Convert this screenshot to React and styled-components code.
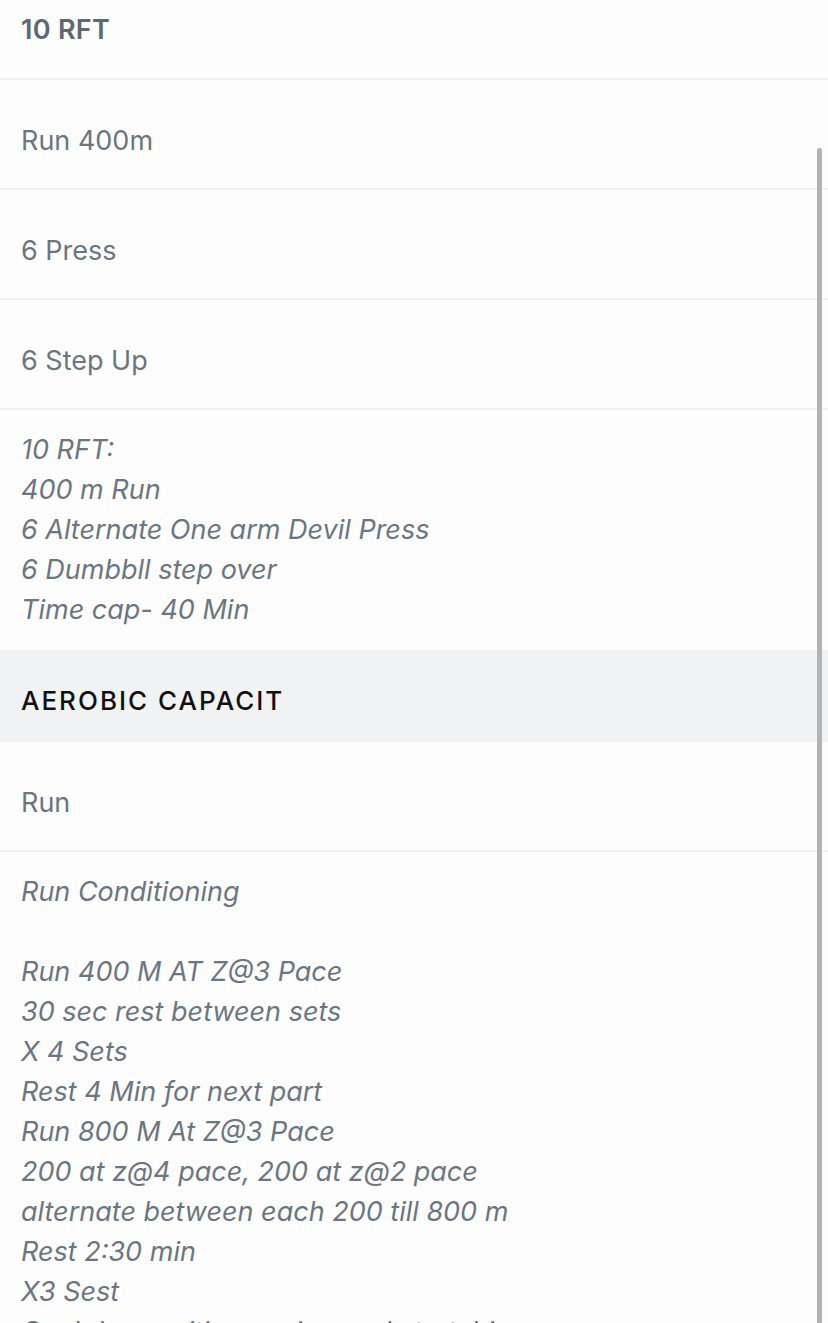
import styled, { createGlobalStyle } from 'styled-components';

const GlobalStyle = createGlobalStyle`
    *, *::before, *::after {
        box-sizing: border-box;
    }
    html, body {
        margin: 0;
        padding: 0;
        background: #fdfdfd;
    }
    body {
        font-family: Inter, "Noto Sans", "Liberation Sans", sans-serif;
        -webkit-font-smoothing: antialiased;
    }
`;

const workout = [
    { type: 'title', text: '10 RFT' },
    { type: 'row', text: 'Run 400m' },
    { type: 'row', text: '6 Press' },
    { type: 'row', text: '6 Step Up' },
    {
        type: 'note',
        lines: ['10 RFT:', '400 m Run', '6 Alternate One arm Devil Press', '6 Dumbbll step over', 'Time cap- 40 Min'],
    },
    { type: 'section', text: 'AEROBIC CAPACIT' },
    { type: 'row', text: 'Run' },
    {
        type: 'note',
        lines: [
            'Run Conditioning',
            '',
            'Run 400 M AT Z@3 Pace',
            '30 sec rest between sets',
            'X 4 Sets',
            'Rest 4 Min for next part',
            'Run 800 M At Z@3 Pace',
            '200 at z@4 pace, 200 at z@2 pace',
            'alternate between each 200 till 800 m',
            'Rest 2:30 min',
            'X3 Sest',
            'Cool down with easy jog and stretching',
        ],
    },
];

function App() {
    return (
        <Screen>
            <GlobalStyle />
            <List>
                {workout.map((item, i) => {
                    if (item.type === 'title') return <TitleRow key={i}>{item.text}</TitleRow>;
                    if (item.type === 'section') return <SectionRow key={i}>{item.text}</SectionRow>;
                    if (item.type === 'note') {
                        return (
                            <NoteBlock key={i}>
                                {item.lines.map((line, j) => (
                                    <NoteLine key={j}>{line || '\u00a0'}</NoteLine>
                                ))}
                            </NoteBlock>
                        );
                    }
                    return <ItemRow key={i}>{item.text}</ItemRow>;
                })}
            </List>
            <ScrollThumb />
        </Screen>
    );
}

const Screen = styled.div`
    position: relative;
    width: 828px;
    height: 1323px;
    overflow: hidden;
    background: #fdfdfd;
`;
const List = styled.div`
    display: flex;
    flex-direction: column;
`;
const TitleRow = styled.div`
    display: flex;
    align-items: center;
    height: 80px;
    padding: 0 21px 20px;
    border-bottom: 2px solid #f1f1f1;

    font-size: 27px;
    font-weight: 600;
    letter-spacing: 0.3px;
    color: #5d6873;
`;
const ItemRow = styled.div`
    display: flex;
    align-items: center;
    height: 110px;
    padding: 12px 21px 0;
    border-bottom: 2px solid #f1f1f1;

    font-size: 27px;
    color: #6b7682;
`;
const NoteBlock = styled.div`
    display: flex;
    flex-direction: column;
    padding: 20px 21px 20px;
`;
const NoteLine = styled.div`
    line-height: 40px;
    font-size: 27px;
    font-style: italic;
    color: #6b7682;
    white-space: nowrap;
`;
const SectionRow = styled.div`
    display: flex;
    align-items: center;
    height: 92px;
    padding: 8px 21px 0;
    background: #f1f2f4;

    font-size: 26px;
    font-weight: 500;
    letter-spacing: 2px;
    color: #111111;
`;
const ScrollThumb = styled.div`
    position: absolute;
    right: 6px;
    top: 148px;
    bottom: -10px;
    width: 5px;
    border-radius: 3px;
    background: #b3b3b3;
`;

export default App;
